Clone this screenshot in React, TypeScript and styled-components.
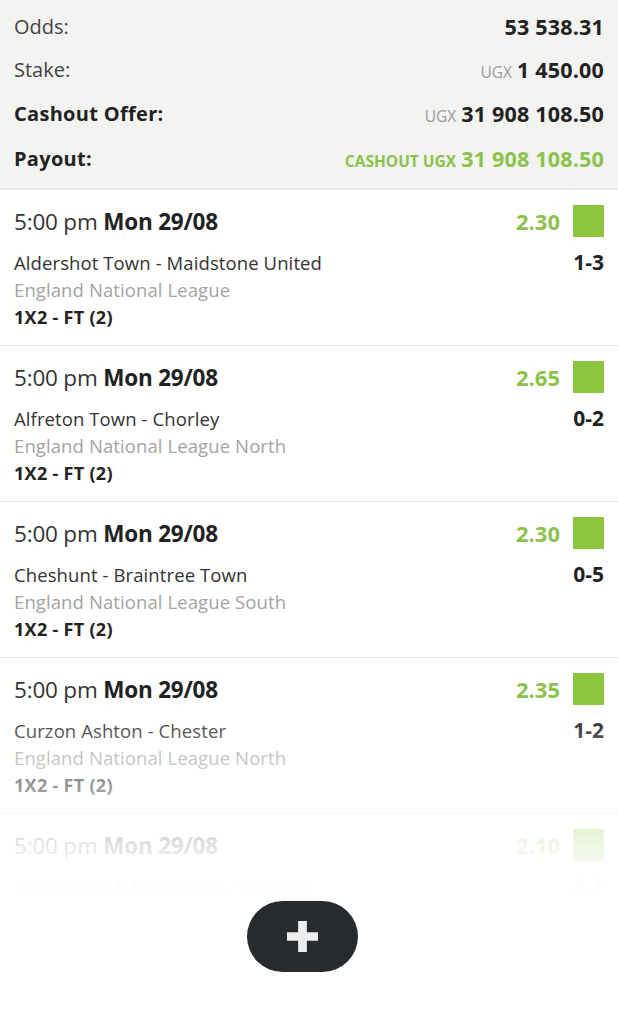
import React from "react";
import styled, { createGlobalStyle } from "styled-components";

const Global = createGlobalStyle`
  *, *::before, *::after { box-sizing: border-box; }
  html, body { margin: 0; padding: 0; background: #ffffff; }
  body { font-family: "Open Sans", Lato, sans-serif; color: #222; }
`;

const Page = styled.div`
  width: 618px;
  height: 1030px;
  overflow: hidden;
  position: relative;
  background: #fff;
  display: flex;
  flex-direction: column;
`;

const Summary = styled.section`
  background: #f3f3f1;
  padding: 4px 14px 0 14px;
  height: 190px;
  border-bottom: 2px solid #ebebea;
  display: flex;
  flex-direction: column;
`;

const SumRow = styled.div<{ $h: number }>`
  display: flex;
  justify-content: space-between;
  align-items: center;
  height: ${(p) => p.$h}px;
`;

const Label = styled.span<{ $bold?: boolean }>`
  font-size: 20px;
  font-weight: ${(p) => (p.$bold ? 700 : 400)};
  color: ${(p) => (p.$bold ? "#222" : "#444")};
  letter-spacing: ${(p) => (p.$bold ? "0.3px" : "0")};
`;

const Value = styled.span<{ $green?: boolean }>`
  font-size: 21.5px;
  font-weight: 700;
  color: ${(p) => (p.$green ? "#8bc34a" : "#222")};
  display: flex;
  align-items: baseline;
  gap: 5px;
  letter-spacing: 0.2px;
`;

const Prefix = styled.span<{ $green?: boolean }>`
  font-size: 15.5px;
  font-weight: ${(p) => (p.$green ? 700 : 400)};
  color: ${(p) => (p.$green ? "#8bc34a" : "#9a9a9a")};
  letter-spacing: 0;
`;

const ListWrap = styled.div`
  position: relative;
  height: 705px;
  overflow: hidden;
  flex-shrink: 0;
`;

const Fade = styled.div`
  position: absolute;
  left: 0;
  right: 0;
  top: 520px;
  bottom: 0;
  background: linear-gradient(
    to bottom,
    rgba(255, 255, 255, 0) 0%,
    rgba(255, 255, 255, 0.35) 24%,
    rgba(255, 255, 255, 0.86) 72%,
    rgba(255, 255, 255, 0.97) 90%,
    #fff 100%
  );
  pointer-events: none;
`;

const Event = styled.article`
  height: 156px;
  border-bottom: 1px solid #e6e6e6;
  padding: 14px 14px 0 14px;
  display: flex;
  flex-direction: column;
`;

const TopLine = styled.div`
  display: flex;
  justify-content: space-between;
  align-items: center;
  height: 34px;
`;

const Time = styled.span`
  font-size: 22.5px;
  color: #333;
  font-weight: 400;
  letter-spacing: -0.2px;
  b {
    font-weight: 700;
    color: #222;
  }
`;

const OddsWrap = styled.div`
  display: flex;
  align-items: center;
  gap: 13px;
`;

const Odds = styled.span`
  font-size: 22px;
  font-weight: 700;
  color: #8bc34a;
`;

const Box = styled.span`
  width: 31px;
  height: 32px;
  background: #8cc63f;
  display: inline-block;
`;

const TeamLine = styled.div`
  display: flex;
  justify-content: space-between;
  align-items: center;
  margin-top: 10px;
  height: 28px;
`;

const Teams = styled.span`
  font-size: 18.5px;
  color: #333;
  letter-spacing: 0.1px;
`;

const Score = styled.span`
  font-size: 21px;
  font-weight: 700;
  color: #222;
`;

const League = styled.div`
  font-size: 18.5px;
  color: #a3a3a3;
  height: 27px;
  line-height: 27px;
  letter-spacing: 0.1px;
`;

const Market = styled.div`
  font-size: 18px;
  font-weight: 700;
  color: #222;
  height: 28px;
  line-height: 28px;
  letter-spacing: 0.3px;
`;

const Footer = styled.div`
  flex: 1;
  display: flex;
  justify-content: center;
  padding-top: 6px;
  padding-right: 13px;
`;

const AddButton = styled.button`
  width: 111px;
  height: 71px;
  border-radius: 36px;
  border: none;
  background: #272b2e;
  display: flex;
  align-items: center;
  justify-content: center;
  padding: 0;
  cursor: pointer;
`;

const events = [
  { odds: "2.30", teams: "Aldershot Town - Maidstone United", league: "England National League", score: "1-3" },
  { odds: "2.65", teams: "Alfreton Town - Chorley", league: "England National League North", score: "0-2" },
  { odds: "2.30", teams: "Cheshunt - Braintree Town", league: "England National League South", score: "0-5" },
  { odds: "2.35", teams: "Curzon Ashton - Chester", league: "England National League North", score: "1-2" },
  { odds: "2.10", teams: "Dagenham & Redbridge - Bromley", league: "England National League", score: "4-1" },
];

export default function App() {
  return (
    <Page>
      <Global />
      <Summary>
        <SumRow $h={44}>
          <Label>Odds:</Label>
          <Value>53 538.31</Value>
        </SumRow>
        <SumRow $h={42}>
          <Label>Stake:</Label>
          <Value>
            <Prefix>UGX</Prefix>1 450.00
          </Value>
        </SumRow>
        <SumRow $h={46}>
          <Label $bold>Cashout Offer:</Label>
          <Value>
            <Prefix>UGX</Prefix>31 908 108.50
          </Value>
        </SumRow>
        <SumRow $h={44}>
          <Label $bold>Payout:</Label>
          <Value $green>
            <Prefix $green>CASHOUT UGX</Prefix>31 908 108.50
          </Value>
        </SumRow>
      </Summary>
      <ListWrap>
        {events.map((e, i) => (
          <Event key={i}>
            <TopLine>
              <Time>
                5:00 pm <b>Mon 29/08</b>
              </Time>
              <OddsWrap>
                <Odds>{e.odds}</Odds>
                <Box />
              </OddsWrap>
            </TopLine>
            <TeamLine>
              <Teams>{e.teams}</Teams>
              <Score>{e.score}</Score>
            </TeamLine>
            <League>{e.league}</League>
            <Market>1X2 - FT (2)</Market>
          </Event>
        ))}
        <Fade />
      </ListWrap>
      <Footer>
        <AddButton aria-label="Add">
          <svg width="31" height="31" viewBox="0 0 32 32">
            <path d="M11.5 0h9v11.5H32v9H20.5V32h-9V20.5H0v-9h11.5z" fill="#eeeeee" />
          </svg>
        </AddButton>
      </Footer>
    </Page>
  );
}
